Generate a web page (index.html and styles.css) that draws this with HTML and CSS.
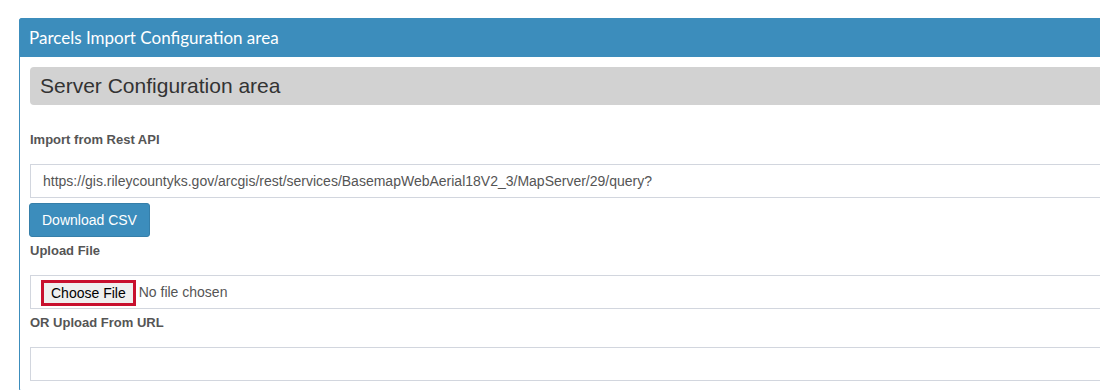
FILE: index.html
```html
<!DOCTYPE html>
<html lang="en">
  <head>
    <meta charset="UTF-8" />
    <title>Parcels Import</title>
    <link rel="stylesheet" href="styles.css">
  </head>
  <body>
    <div class="panel">
      <div class="panel-heading">Parcels Import Configuration area</div>
      <div class="panel-body">
        <!-- Server section -->
        <div class="section-title">Server Configuration area</div>

        <label class="first">Import from Rest API</label>
        <input class="form-control" type="text"
          value="https://gis.rileycountyks.gov/arcgis/rest/services/BasemapWebAerial18V2_3/MapServer/29/query?" />
        <button class="btn-primary">Download CSV</button>

        <label>Upload File</label>
        <div class="form-control file-input">
          <span class="file-btn">Choose File</span>
          <span class="file-name">No file chosen</span>
        </div>

        <label>OR Upload From URL</label>
        <input class="form-control" type="text" />
      </div>
    </div>
  </body>
</html>
```

FILE: styles.css
```css
* {
  box-sizing: border-box;
}
body {
  margin: 0;
  padding: 18px 0 0 19px;
  background: #fff;
  font-family: "Liberation Sans", Arial, sans-serif;
  overflow: hidden;
}
.panel {
  width: 1200px;
  border: 1px solid #3c8dbc;
  border-radius: 3px;
}
.panel-heading {
  background: #3c8dbc;
  color: #fff;
  font-family: Lato, "Open Sans", sans-serif;
  font-size: 17px;
  height: 39px;
  line-height: 39px;
  padding: 0 10px;
  margin: -1px -1px 0 -1px;
  border-radius: 3px 3px 0 0;
}
.panel-body {
  padding: 10px;
}
.section-title {
  background: #d2d2d2;
  border-radius: 4px;
  height: 38px;
  line-height: 38px;
  padding: 0 10px;
  font-size: 21px;
  color: #333;
}
label {
  display: block;
  font-size: 13px;
  font-weight: bold;
  color: #555;
  line-height: 20px;
  margin: 4px 0 14px;
}
label.first {
  margin-top: 25px;
}
.form-control {
  display: block;
  width: 100%;
  height: 34px;
  border: 1px solid #d2d6de;
  padding: 6px 12px;
  font-family: "Liberation Sans", Arial, sans-serif;
  font-size: 14px;
  color: #555;
  outline: none;
}
.btn-primary {
  display: block;
  margin: 5px 0 0 -1px;
  height: 34px;
  padding: 0 12px;
  background: #3c8dbc;
  border: 1px solid #367fa9;
  border-radius: 3px;
  color: #fff;
  font-family: "Liberation Sans", Arial, sans-serif;
  font-size: 14px;
}
.file-input {
  display: flex;
  align-items: center;
  padding: 4px 10px;
}
.file-btn {
  border: 3px solid #c8102e;
  background: #efefef;
  color: #000;
  padding: 0 7px;
  height: 26px;
  line-height: 20px;
  margin: 1px 3px 0 0;
}
.file-name {
  color: #555;
}
```
